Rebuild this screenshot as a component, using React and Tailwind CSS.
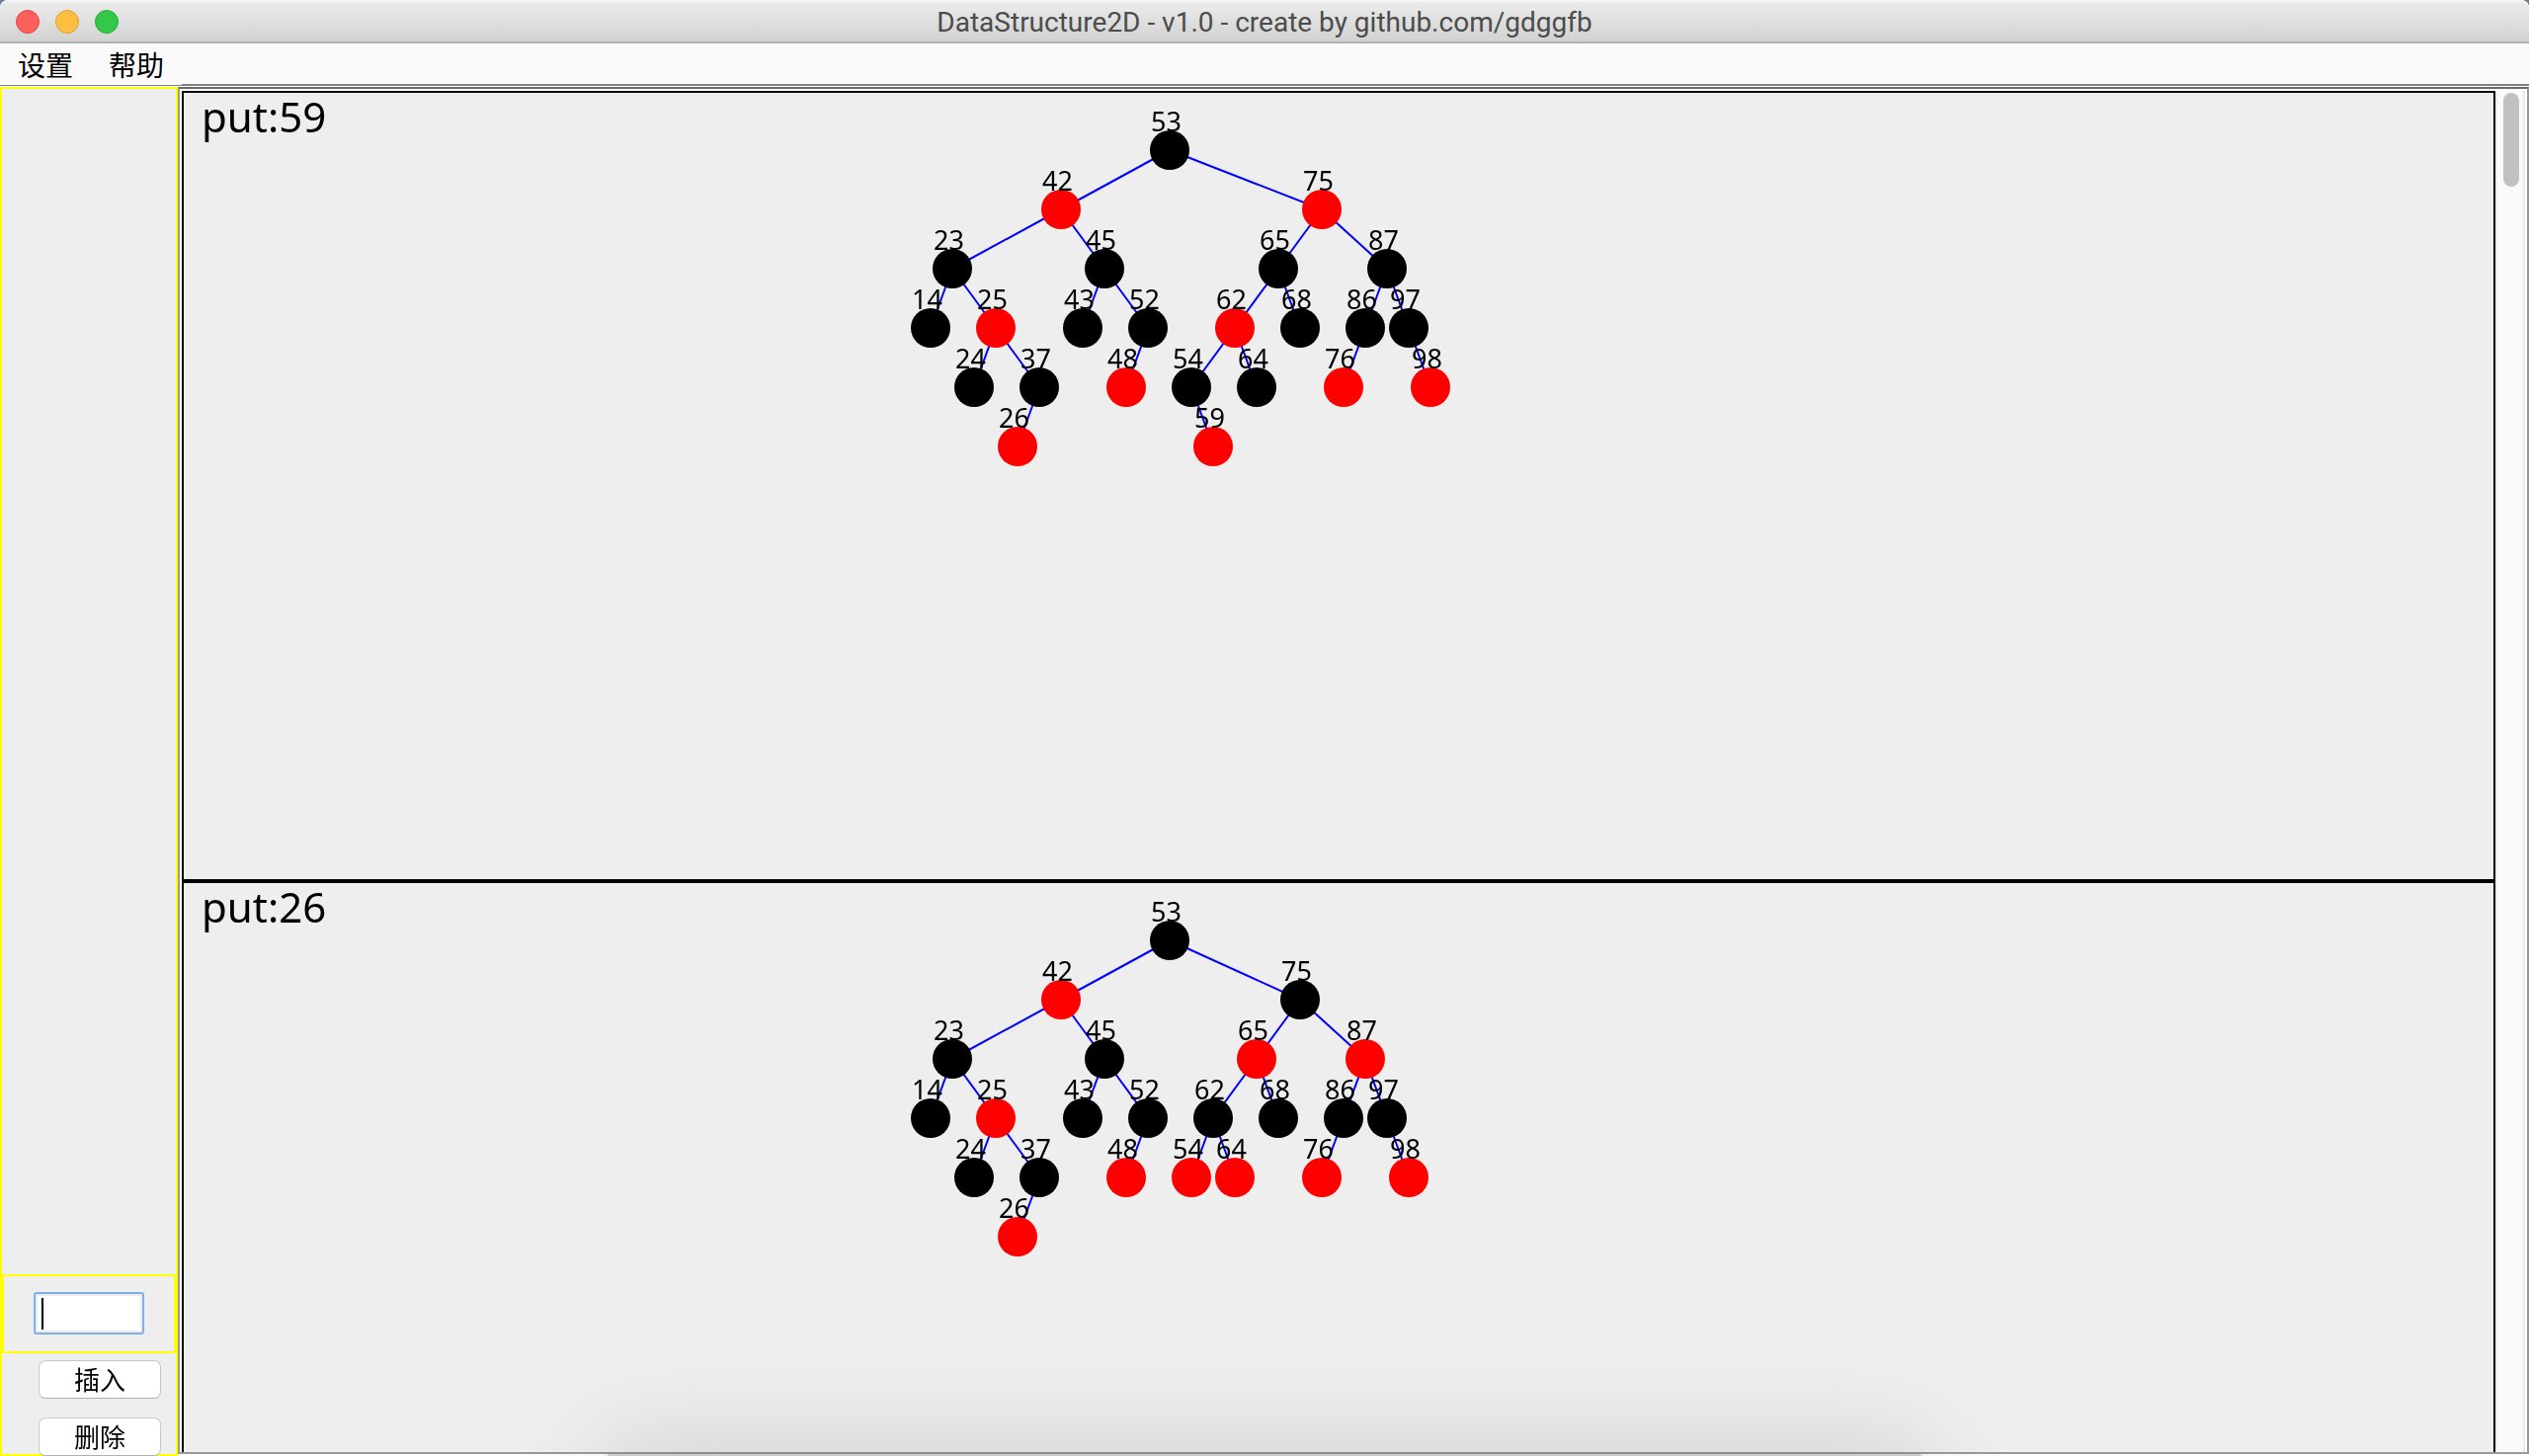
import React from "react";

const n = (value, color, left, right) => ({ value, color, left, right });
const R = "#ff0000";
const B = "#000000";

const leftBranch = () =>
  n(
    42,
    R,
    n(23, B, n(14, B), n(25, R, n(24, B), n(37, B, n(26, R)))),
    n(45, B, n(43, B), n(52, B, n(48, R)))
  );

const snapshots = [
  {
    title: "put:59",
    tree: n(
      53,
      B,
      leftBranch(),
      n(
        75,
        R,
        n(65, B, n(62, R, n(54, B, null, n(59, R)), n(64, B)), n(68, B)),
        n(87, B, n(86, B, n(76, R)), n(97, B, null, n(98, R)))
      )
    ),
  },
  {
    title: "put:26",
    tree: n(
      53,
      B,
      leftBranch(),
      n(
        75,
        B,
        n(65, R, n(62, B, n(54, R), n(64, R)), n(68, B)),
        n(87, R, n(86, B, n(76, R)), n(97, B, null, n(98, R)))
      )
    ),
  },
];

// Nodes are spread horizontally by in-order index and vertically by depth.
function layout(root) {
  const nodes = [];
  const edges = [];
  let index = 0;
  const visit = (node, depth) => {
    if (!node) return null;
    const l = visit(node.left, depth + 1);
    const p = { value: node.value, color: node.color, x: 756 + 22 * index++, y: 58 + 60 * depth };
    nodes.push(p);
    const r = visit(node.right, depth + 1);
    if (l) edges.push([p, l]);
    if (r) edges.push([p, r]);
    return p;
  };
  visit(root, 0);
  return { nodes, edges };
}

function TreePanel({ title, tree }) {
  const { nodes, edges } = layout(tree);
  return (
    <section className="relative h-[800px] shrink-0 border-2 border-black bg-[#eeeeee]">
      <h2 className="pt-1 pl-[18px] text-[42px] leading-10 text-black">{title}</h2>
      <svg className="absolute inset-0 h-full w-full" aria-label={title}>
        {edges.map(([a, b]) => (
          <line key={b.value} x1={a.x} y1={a.y} x2={b.x} y2={b.y} stroke="#0000ff" strokeWidth="2" />
        ))}
        {nodes.map((p) => (
          <circle key={p.value} cx={p.x} cy={p.y} r="20" fill={p.color} />
        ))}
        {nodes.map((p) => (
          <text key={p.value} x={p.x - 19} y={p.y - 19} className="fill-black text-[27px]">
            {p.value}
          </text>
        ))}
      </svg>
    </section>
  );
}

function TitleBar() {
  const light = "size-6 rounded-full border";
  return (
    <header className="flex h-11 items-center rounded-t-lg border-b-2 border-[#b1b1b1] bg-linear-to-b from-[#ededed] to-[#d2d2d2] px-4 pt-0.5 shadow-[inset_0_2px_0_#f5f5f5]">
      <div className="flex flex-1 gap-4">
        <button aria-label="Close" className={light + " border-[#e0443e] bg-[#fc605b]"} />
        <button aria-label="Minimize" className={light + " border-[#dea035] bg-[#fdbe41]"} />
        <button aria-label="Zoom" className={light + " border-[#27aa35] bg-[#34c84a]"} />
      </div>
      <h1 className="pt-0.5 font-['Roboto',sans-serif] text-[28px] leading-8 text-[#4c4c4c]">
        DataStructure2D - v1.0 - create by github.com/gdggfb
      </h1>
      <div className="flex-1" />
    </header>
  );
}

function Sidebar() {
  const button =
    "h-[39px] w-[124px] rounded-[7px] border border-[#c8c8c8] border-b-[#b0b0b0] bg-white text-[26px] leading-8 text-black";
  return (
    <aside className="flex w-[180px] shrink-0 flex-col border-2 border-[#ffff00] bg-[#eeeeee]">
      <div className="flex-1" />
      <div className="flex h-20 shrink-0 justify-center border-2 border-[#ffff00] pt-4">
        <input
          aria-label="数值"
          autoFocus
          defaultValue=""
          className="h-[43px] w-[112px] rounded-[3px] border-2 border-[#7eb0e8] bg-white px-1.5 text-[28px] caret-transparent shadow-[inset_0_0_0_2px_#ececec] outline-none bg-[linear-gradient(#000,#000)] bg-[length:2px_32px] bg-[position:6px_4px] bg-no-repeat"
        />
      </div>
      <div className="-mb-0.5 flex shrink-0 flex-col gap-[19px] pt-[7px] pl-[37px]">
        <button className={button}>插入</button>
        <button className={button}>删除</button>
      </div>
    </aside>
  );
}

export default function App() {
  return (
    <div className="relative flex h-screen w-full flex-col overflow-hidden bg-white font-['Noto_Sans','Noto_Sans_CJK_SC',sans-serif]">
      <div className="bg-[#6f7f98]">
        <TitleBar />
      </div>
      <nav className="flex h-[41px] shrink-0 items-center gap-9 bg-[#fafafa] pt-0.5 pl-[18px] text-[28px] leading-9 text-black">
        <button>设置</button>
        <button>帮助</button>
      </nav>
      <div className="flex h-[3px] shrink-0">
        <div className="w-[184px] border-t border-[#fafafa] shadow-[inset_0_1px_0_#808080]" />
        <div className="flex-1 border-t-2 border-[#808080]" />
      </div>
      <div className="flex min-h-0 flex-1">
        <Sidebar />
        <main className="mb-0.5 flex min-w-0 flex-1 border-2 border-[#999999] border-t-[#6a6a6a] pt-0.5 pr-0.5 pl-0.5">
          <div className="flex min-w-0 flex-1 flex-col overflow-hidden">
            {snapshots.map((s) => (
              <TreePanel key={s.title} title={s.title} tree={s.tree} />
            ))}
          </div>
          <div className="w-[30px] border-x-2 border-[#ebebeb] bg-[#fafafa] pt-0.5 pl-1.5">
            <div className="h-[95px] w-4 rounded-full bg-[#c1c1c1]" />
          </div>
        </main>
      </div>
      <div className="pointer-events-none absolute top-full right-[24%] left-[24%] -mt-0.5 h-20 rounded-t bg-[#cccccc] shadow-[0_0_100px_rgba(0,0,0,0.16)]" />
    </div>
  );
}
